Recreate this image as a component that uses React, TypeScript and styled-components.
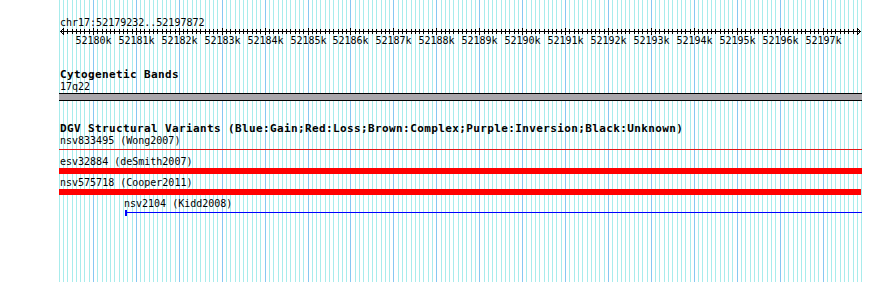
import React from "react";
import styled, { createGlobalStyle } from "styled-components";

const START = 52179232;
const END = 52197872;
const PANEL_WIDTH = 803;
const SCALE = 800 / (END - START);

// panel starts one pixel left of the scale origin
const toX = (bp: number) => Math.round(1 + (bp - START) * SCALE);

const GlobalStyle = createGlobalStyle`
  html, body {
    margin: 0;
    padding: 0;
    background: #ffffff;
  }
  body {
    font-family: "DejaVu Sans Mono", "Liberation Mono", monospace;
    color: #000000;
  }
`;

const Page = styled.div`
  width: 890px;
  height: 282px;
  overflow: hidden;
  padding-left: 59px;
  box-sizing: border-box;
`;

const Panel = styled.div`
  position: relative;
  width: ${PANEL_WIDTH}px;
  height: 282px;
  padding-top: 16px;
  box-sizing: border-box;
`;

const GridSvg = styled.svg`
  position: absolute;
  left: 0;
  top: 0;
  width: ${PANEL_WIDTH}px;
  height: 100%;
  z-index: 0;
`;

const Content = styled.div`
  position: relative;
  z-index: 1;
`;

const Header = styled.div`
  font-size: 10px;
  line-height: 13px;
  padding-left: 1px;
  white-space: nowrap;
`;

const RulerSvg = styled.svg`
  display: block;
  margin-top: -3px;
  width: ${PANEL_WIDTH}px;
  height: 22px;
  overflow: visible;
`;

const TrackTitle = styled.div<{ $gap: number }>`
  margin-top: ${(p) => p.$gap}px;
  font-size: 11px;
  font-weight: bold;
  letter-spacing: 0.38px;
  line-height: 13px;
  padding-left: 1px;
  white-space: nowrap;
`;

const FeatureLabel = styled.div<{ $offset: number }>`
  font-size: 10px;
  line-height: 12px;
  height: 12px;
  padding-left: ${(p) => p.$offset}px;
  white-space: nowrap;
`;

const BandStrip = styled.div`
  height: 8px;
  box-sizing: border-box;
  border-top: 1px solid #000000;
  border-bottom: 1px solid #000000;
  background: #a9a7ab;
`;

const GlyphArea = styled.div<{ $offset: number; $width: number }>`
  display: flex;
  align-items: flex-start;
  height: 9px;
  margin-left: ${(p) => p.$offset}px;
  width: ${(p) => p.$width}px;
`;

const Bar = styled.div<{ $color: string }>`
  flex: 1;
  height: 6px;
  background: ${(p) => p.$color};
`;

const Line = styled.div<{ $color: string }>`
  flex: 1;
  height: 1px;
  margin-top: 2px;
  background: ${(p) => p.$color};
`;

const StartTick = styled.div<{ $color: string }>`
  width: 2px;
  height: 6px;
  background: ${(p) => p.$color};
`;

type Variant = {
  label: string;
  color: string;
  kind: "bar" | "line";
  start?: number;
  right?: number;
  tick?: boolean;
};

const variants: Variant[] = [
  { label: "nsv833495 (Wong2007)", color: "#e31414", kind: "line" },
  { label: "esv32884 (deSmith2007)", color: "#ff0000", kind: "bar" },
  { label: "nsv575718 (Cooper2011)", color: "#ff0000", kind: "bar", right: 802 },
  {
    label: "nsv2104 (Kidd2008)",
    color: "#0000ff",
    kind: "line",
    start: 52180747,
    tick: true,
  },
];

const gridPositions: number[] = [];
for (let bp = 52179200; bp <= END + 100; bp += 100) {
  const x = toX(bp);
  if (x >= 0 && x <= PANEL_WIDTH - 1) gridPositions.push(bp);
}

const Grid = () => (
  <GridSvg>
    {gridPositions.map((bp) => {
      const major = bp % 1000 === 0;
      const x = toX(bp) + 0.5;
      return (
        <line
          key={bp}
          x1={x}
          x2={x}
          y1={0}
          y2={282}
          stroke={major ? "#87c8f2" : "#a8ecec"}
          strokeWidth={1}
          shapeRendering="crispEdges"
        />
      );
    })}
  </GridSvg>
);

const Ruler = () => {
  const ticks: number[] = [];
  for (let bp = 52179300; bp < END; bp += 100) ticks.push(bp);
  const right = toX(END);
  return (
    <RulerSvg>
      <g stroke="#000" strokeWidth={1} shapeRendering="crispEdges" fill="none">
        <line x1={1} x2={right + 1} y1={5.5} y2={5.5} />
        {ticks.map((bp) => {
          const x = toX(bp) + 0.5;
          const major = bp % 1000 === 0;
          return (
            <line key={bp} x1={x} x2={x} y1={major ? 2 : 3} y2={major ? 9 : 8} />
          );
        })}
        <polyline points="5,2 1.5,5.5 5,9" />
        <polyline points={`${right - 3},2 ${right + 0.5},5.5 ${right - 3},9`} />
      </g>
      {ticks
        .filter((bp) => bp % 1000 === 0)
        .map((bp) => (
          <text
            key={bp}
            x={toX(bp) + 0.5}
            y={18}
            textAnchor="middle"
            fontSize={10}
            fontFamily='"DejaVu Sans Mono", monospace'
            fill="#000"
          >
            {`${bp / 1000}k`}
          </text>
        ))}
    </RulerSvg>
  );
};

const VariantRow = ({ v }: { v: Variant }) => {
  const x = v.start ? toX(v.start) : 0;
  const right = v.right ?? PANEL_WIDTH;
  return (
    <div>
      <FeatureLabel $offset={Math.max(1, x - 1)}>{v.label}</FeatureLabel>
      <GlyphArea $offset={x} $width={right - x}>
        {v.tick && <StartTick $color={v.color} />}
        {v.kind === "bar" ? <Bar $color={v.color} /> : <Line $color={v.color} />}
      </GlyphArea>
    </div>
  );
};

const App = () => (
  <>
    <GlobalStyle />
    <Page>
      <Panel>
        <Grid />
        <Content>
          <Header>chr17:52179232..52197872</Header>
          <Ruler />
          <TrackTitle $gap={20}>Cytogenetic Bands</TrackTitle>
          <FeatureLabel $offset={1}>17q22</FeatureLabel>
          <BandStrip />
          <TrackTitle $gap={21}>
            DGV Structural Variants (Blue:Gain;Red:Loss;Brown:Complex;Purple:Inversion;Black:Unknown)
          </TrackTitle>
          {variants.map((v) => (
            <VariantRow key={v.label} v={v} />
          ))}
        </Content>
      </Panel>
    </Page>
  </>
);

export default App;
